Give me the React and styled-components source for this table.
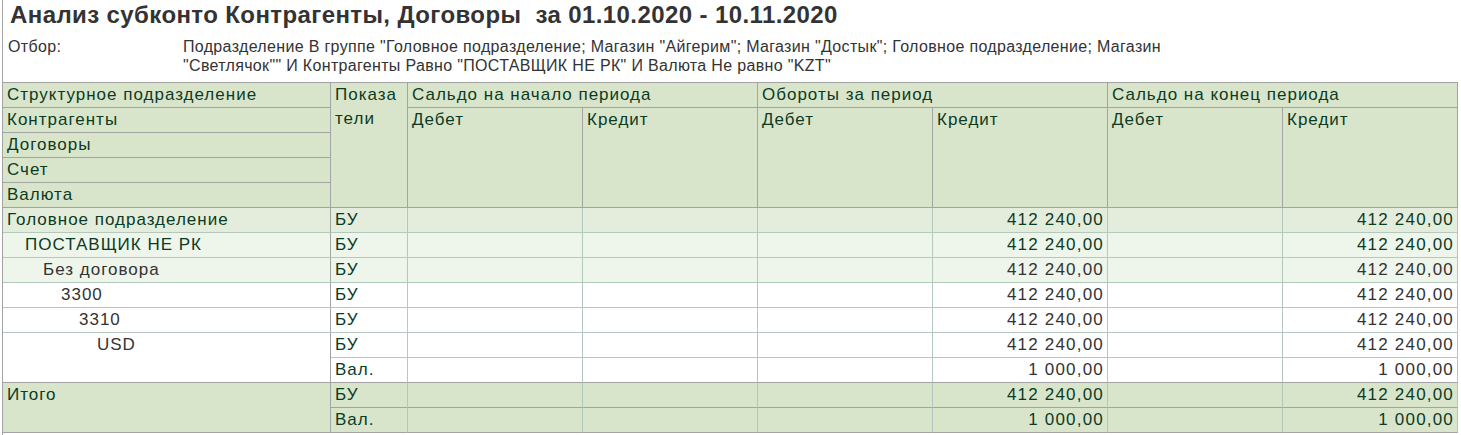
import React from "react";
import styled, { createGlobalStyle } from "styled-components";

const GlobalStyle = createGlobalStyle`
  html, body {
    margin: 0;
    padding: 0;
    background: #fff;
  }
  body {
    font-family: "Liberation Sans", Arial, sans-serif;
  }
`;

const GREEN_TEXT = "#0b3b24";
const GRAY_TEXT = "#333333";
const HEAD_BG = "#d9e5cb";
const HEAD_LINE = "#a3a3a3";
const DATA_LINE = "#b3c9bd";

const Sheet = styled.div`
  margin-left: 2px;
  min-height: 100vh;
  border-left: 1px solid ${HEAD_LINE};
  box-sizing: border-box;
`;

const Title = styled.h1`
  margin: 0;
  padding: 1px 0 0 7px;
  font-size: 24px;
  line-height: 28px;
  letter-spacing: 0.4px;
  font-weight: bold;
  color: ${GRAY_TEXT};
  white-space: pre;
`;

const Filter = styled.div`
  display: grid;
  grid-template-columns: 175px 1fr;
  padding: 8px 0 7px 5px;
  font-size: 16px;
  line-height: 19px;
  letter-spacing: 0.33px;
  color: ${GRAY_TEXT};
`;

const Table = styled.table`
  border-collapse: separate;
  border-spacing: 0;
  table-layout: fixed;
  width: 1455px;
  border-top: 1px solid ${HEAD_LINE};
  font-size: 17px;
  letter-spacing: 1px;
`;

const HeadCell = styled.th`
  height: 24px;
  padding: 0 0 0 4px;
  border-right: 1px solid ${HEAD_LINE};
  border-bottom: 1px solid ${HEAD_LINE};
  background: ${HEAD_BG};
  color: ${GREEN_TEXT};
  font-weight: normal;
  text-align: left;
  vertical-align: top;
  line-height: 24px;
  white-space: nowrap;
  overflow: hidden;
`;

const rowBg = {
  group: "#e4eddb",
  sub: "#eef5ea",
  plain: "#ffffff",
  total: HEAD_BG,
};

const Cell = styled.td`
  height: 24px;
  padding: 0 3px 0 ${(p) => 4 + (p.$level || 0) * 18}px;
  border-right: 1px solid ${(p) => (p.$first ? HEAD_LINE : DATA_LINE)};
  border-bottom: 1px solid ${(p) => (p.$strong ? HEAD_LINE : DATA_LINE)};
  background: ${(p) => rowBg[p.$tone]};
  color: ${(p) => (p.$green ? GREEN_TEXT : GRAY_TEXT)};
  text-align: ${(p) => (p.$num ? "right" : "left")};
  letter-spacing: ${(p) => (p.$num ? "1.2px" : "inherit")};
  vertical-align: top;
  line-height: 24px;
  white-space: nowrap;
  overflow: hidden;
`;

const groupHeads = [
  "Сальдо на начало периода",
  "Обороты за период",
  "Сальдо на конец периода",
];

const AMOUNT = "412 240,00";
const CURRENCY = "1 000,00";

const rows = [
  { name: "Головное подразделение", level: 0, tone: "group", green: true },
  { name: "ПОСТАВЩИК НЕ РК", level: 1, tone: "sub", green: true },
  { name: "Без договора", level: 2, tone: "sub" },
  { name: "3300", level: 3, tone: "plain" },
  { name: "3310", level: 4, tone: "plain" },
];

function Amounts({ value, tone, green, strong }) {
  const cells = ["", "", "", value, "", value];
  return cells.map((v, i) => (
    <Cell key={i} $num $tone={tone} $green={green} $strong={strong}>
      {v}
    </Cell>
  ));
}

export default function App() {
  return (
    <>
      <GlobalStyle />
      <Sheet>
        <Title>Анализ субконто Контрагенты, Договоры  за 01.10.2020 - 10.11.2020</Title>
        <Filter>
          <span>Отбор:</span>
          <span>
            Подразделение В группе "Головное подразделение; Магазин "Айгерим"; Магазин "Достык"; Головное подразделение; Магазин
            <br />
            "Светлячок"" И Контрагенты Равно "ПОСТАВЩИК НЕ РК" И Валюта Не равно "KZT"
          </span>
        </Filter>

        <Table>
          <colgroup>
            <col style={{ width: 328 }} />
            <col style={{ width: 77 }} />
            {Array.from({ length: 6 }, (_, i) => (
              <col key={i} style={{ width: 175 }} />
            ))}
          </colgroup>
          <thead>
            <tr>
              <HeadCell>Структурное подразделение</HeadCell>
              <HeadCell rowSpan={5}>
                Показа
                <br />
                тели
              </HeadCell>
              {groupHeads.map((h) => (
                <HeadCell key={h} colSpan={2}>
                  {h}
                </HeadCell>
              ))}
            </tr>
            <tr>
              <HeadCell>Контрагенты</HeadCell>
              {groupHeads.map((h) => (
                <React.Fragment key={h}>
                  <HeadCell rowSpan={4}>Дебет</HeadCell>
                  <HeadCell rowSpan={4}>Кредит</HeadCell>
                </React.Fragment>
              ))}
            </tr>
            <tr>
              <HeadCell>Договоры</HeadCell>
            </tr>
            <tr>
              <HeadCell>Счет</HeadCell>
            </tr>
            <tr>
              <HeadCell>Валюта</HeadCell>
            </tr>
          </thead>
          <tbody>
            {rows.map((r) => (
              <tr key={r.name}>
                <Cell $first $level={r.level} $tone={r.tone} $green={r.green}>
                  {r.name}
                </Cell>
                <Cell $tone={r.tone} $green>
                  БУ
                </Cell>
                <Amounts value={AMOUNT} tone={r.tone} green={r.green} />
              </tr>
            ))}
            <tr>
              <Cell $first rowSpan={2} $level={5} $tone="plain" $strong>
                USD
              </Cell>
              <Cell $tone="plain" $green>
                БУ
              </Cell>
              <Amounts value={AMOUNT} tone="plain" />
            </tr>
            <tr>
              <Cell $tone="plain" $green $strong>
                Вал.
              </Cell>
              <Amounts value={CURRENCY} tone="plain" strong />
            </tr>
            <tr>
              <Cell $first rowSpan={2} $tone="total" $green $strong>
                Итого
              </Cell>
              <Cell $tone="total" $green $strong>
                БУ
              </Cell>
              <Amounts value={AMOUNT} tone="total" green strong />
            </tr>
            <tr>
              <Cell $tone="total" $green $strong>
                Вал.
              </Cell>
              <Amounts value={CURRENCY} tone="total" green strong />
            </tr>
          </tbody>
        </Table>
      </Sheet>
    </>
  );
}
